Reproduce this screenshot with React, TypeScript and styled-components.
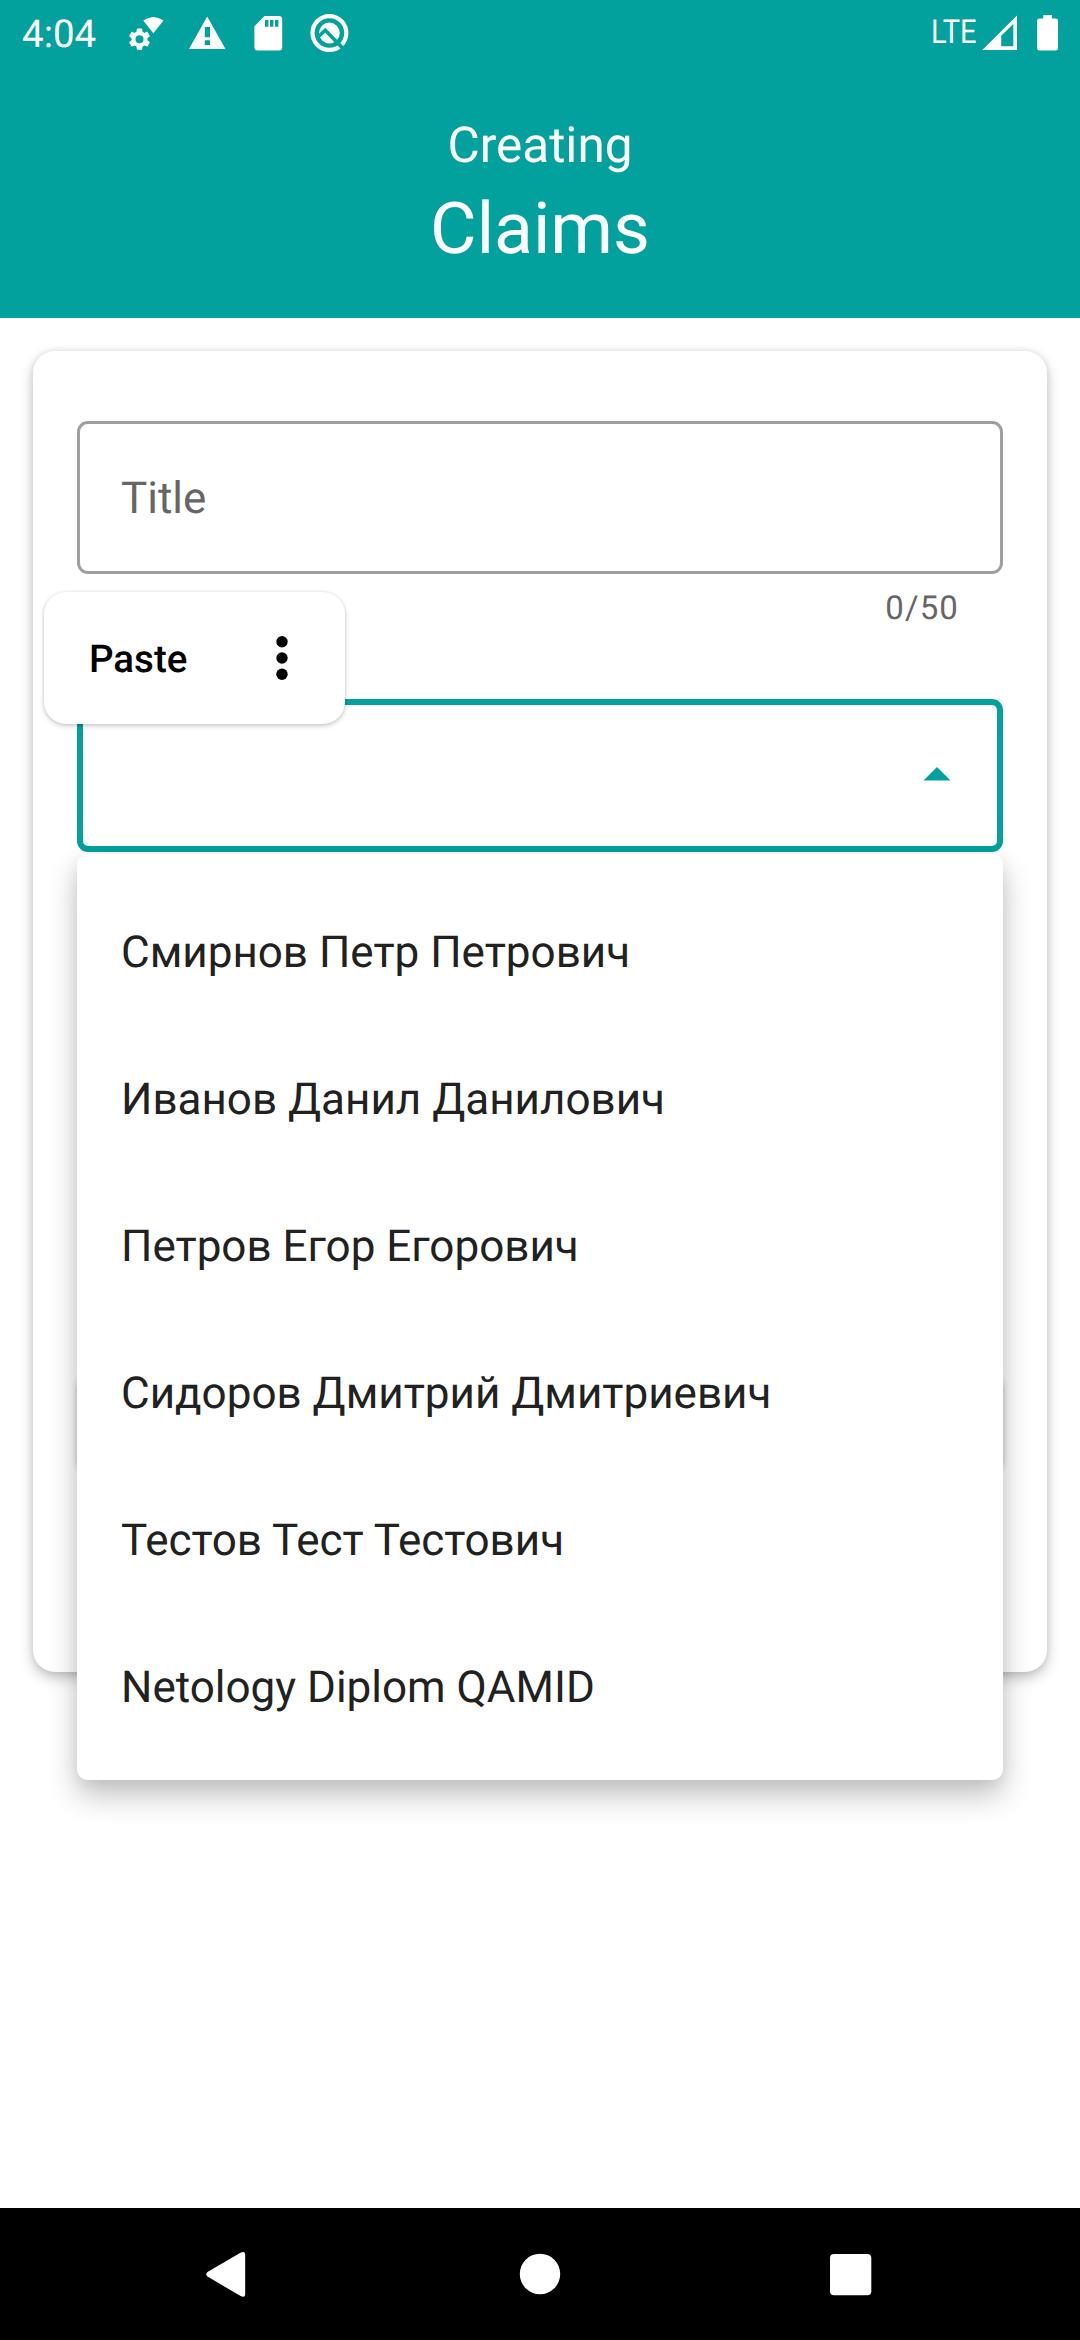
import React from 'react';
import styled, { createGlobalStyle } from 'styled-components';

const teal = '#03a19e';

const GlobalStyle = createGlobalStyle`
  * { box-sizing: border-box; }
  body { margin: 0; background: #fff; }
`;

const Screen = styled.div`
  width: 1080px;
  height: 2340px;
  display: flex;
  flex-direction: column;
  overflow: hidden;
  background: #fff;
  font-family: Roboto, 'Noto Sans', sans-serif;
  text-rendering: geometricPrecision;
`;

const StatusBar = styled.div`
  height: 66px;
  padding: 0 20px 0 22px;
  display: flex;
  justify-content: space-between;
  background: ${teal};
  color: #fff;
`;

const StatusGroup = styled.div`
  display: flex;
  align-items: flex-start;
`;

const Clock = styled.span`
  width: 103px;
  padding-top: 12px;
  font-size: 38.5px;
  line-height: 45px;
`;

const Network = styled.span`
  width: 49px;
  padding-top: 13px;
  font-size: 33px;
  line-height: 40px;
  transform: scaleX(0.88);
  transform-origin: left;
`;

const Header = styled.header`
  height: 252px;
  padding-top: 51px;
  display: flex;
  flex-direction: column;
  align-items: center;
  background: ${teal};
  color: #fff;
`;

const Subtitle = styled.div`
  font-size: 49.5px;
  line-height: 58px;
`;

const Heading = styled.h1`
  margin: 13px 0 0;
  font-size: 71.5px;
  font-weight: 400;
  line-height: 84px;
`;

const Main = styled.main`
  flex: 1;
  padding: 33px;
`;

const Card = styled.section`
  height: 1321px;
  padding: 70px 44px 0;
  border-radius: 22px;
  background: #fff;
  box-shadow: 0 6px 14px rgba(0, 0, 0, 0.23), 0 0 6px rgba(0, 0, 0, 0.1);
`;

const Field = styled.div<{ $active?: boolean }>`
  height: 153px;
  padding: ${(p) => (p.$active ? '0 46px 4px' : '0 41px')};
  display: flex;
  align-items: center;
  justify-content: ${(p) => (p.$active ? 'flex-end' : 'flex-start')};
  border: ${(p) => (p.$active ? `6px solid ${teal}` : '3px solid #9e9e9e')};
  border-radius: 11px;
  color: #666;
  font-size: 44px;
`;

const Counter = styled.div`
  height: 125px;
  padding: 13px 44px 0;
  color: #666;
  font-size: 33px;
  line-height: 44px;
  letter-spacing: 1.1px;
  text-align: right;
`;

const SelectBox = styled.div`
  position: relative;
`;

const Toolbar = styled.div`
  position: absolute;
  z-index: 2;
  left: -33px;
  top: -107px;
  width: 301px;
  height: 132px;
  padding: 0 57px 0 45px;
  display: flex;
  align-items: center;
  justify-content: space-between;
  border-radius: 22px;
  background: #fff;
  color: #000;
  font-size: 38.5px;
  font-weight: 500;
  box-shadow: 0 2px 5px rgba(0, 0, 0, 0.2), 0 0 3px rgba(0, 0, 0, 0.1);
`;

const ToolbarLabel = styled.span`
  padding-top: 3px;
`;

const Menu = styled.ul`
  position: absolute;
  z-index: 1;
  top: 155px;
  left: 0;
  right: 0;
  margin: 0;
  padding: 22px 0;
  list-style: none;
  border-radius: 11px;
  background: #fff;
  box-shadow: 0 16px 30px rgba(0, 0, 0, 0.23), 0 2px 16px rgba(0, 0, 0, 0.08);
`;

const Option = styled.li`
  height: 147px;
  padding: 4px 44px 0;
  display: flex;
  align-items: center;
  color: #212121;
  font-size: 44px;
`;

const ActionButton = styled.div`
  height: 95px;
  margin-top: 521px;
  border-radius: 11px;
  background: #fff;
  box-shadow: 0 4px 6px rgba(0, 0, 0, 0.22);
`;

const NavBar = styled.nav`
  height: 132px;
  display: flex;
  align-items: center;
  justify-content: center;
  gap: 245px;
  background: #000;
`;

const people = [
  'Смирнов Петр Петрович',
  'Иванов Данил Данилович',
  'Петров Егор Егорович',
  'Сидоров Дмитрий Дмитриевич',
  'Тестов Тест Тестович',
  'Netology Diplom QAMID',
];

const StatusIcons = () => (
  <svg width="235" height="66" viewBox="125 0 235 66" fill="#fff">
    <path d="M153.3 33.3 L143.2 20.6 Q153.3 13.4 163.6 20.6 Z" />
    <g transform="translate(139.5 39.2) scale(1.06) translate(-12 -12)">
      <path
        fillRule="evenodd"
        d="M19.43 12.98c.04-.32.07-.64.07-.98s-.03-.66-.07-.98l2.11-1.65c.19-.15.24-.42.12-.64l-2-3.46c-.12-.22-.39-.3-.61-.22l-2.49 1c-.52-.4-1.08-.73-1.69-.98l-.38-2.65C14.46 2.18 14.25 2 14 2h-4c-.25 0-.46.18-.49.42l-.38 2.65c-.61.25-1.17.59-1.69.98l-2.49-1c-.23-.09-.49 0-.61.22l-2 3.46c-.13.22-.07.49.12.64l2.11 1.65c-.04.32-.07.65-.07.98s.03.66.07.98l-2.11 1.65c-.19.15-.24.42-.12.64l2 3.46c.12.22.39.3.61.22l2.49-1c.52.4 1.08.73 1.69.98l.38 2.65c.03.24.24.42.49.42h4c.25 0 .46-.18.49-.42l.38-2.65c.61-.25 1.17-.59 1.69-.98l2.49 1c.23.09.49 0 .61-.22l2-3.46c.12-.22.07-.49-.12-.64l-2.11-1.65zM12 15.8a3.8 3.8 0 1 1 0-7.6 3.8 3.8 0 0 1 0 7.6z"
      />
    </g>
    <path fillRule="evenodd" d="M207.2 16.5 L225.5 49 H189 Z M204.8 27 V37.2 H210 V27 Z M204.8 40.2 V45 H210 V40.2 Z" />
    <path
      fillRule="evenodd"
      d="M264.5 16 H279 Q282.2 16 282.2 19.4 V47 Q282.2 50.5 279 50.5 H257.6 Q254.4 50.5 254.4 47 V26.3 Z M265 20 V26.8 H268.4 V20 Z M270 20 V26.8 H273.4 V20 Z M275 20 V26.8 H278.4 V20 Z"
    />
    <circle cx="329.4" cy="33" r="16.9" fill="none" stroke="#fff" strokeWidth="4.2" />
    <circle cx="329.4" cy="33" r="10.4" />
    <path d="M317 38 L325.3 30.3 L343 48.6" fill="none" stroke={teal} strokeWidth="3.6" />
  </svg>
);

export default function App() {
  return (
    <Screen>
      <GlobalStyle />
      <StatusBar>
        <StatusGroup>
          <Clock>4:04</Clock>
          <StatusIcons />
        </StatusGroup>
        <StatusGroup>
          <Network>LTE</Network>
          <svg width="80" height="66" viewBox="980 0 80 66" fill="#fff">
            <path fillRule="evenodd" d="M982.3 50 L1017 15.5 V50 Z M1001.2 46.2 H1013.3 V24 L1001.2 35.8 Z" />
            <path d="M1043.2 15 H1052 V18.6 H1055.6 Q1058 18.6 1058 21 V48.2 Q1058 50.6 1055.6 50.6 H1039.5 Q1037.1 50.6 1037.1 48.2 V21 Q1037.1 18.6 1039.5 18.6 H1043.2 Z" />
          </svg>
        </StatusGroup>
      </StatusBar>
      <Header>
        <Subtitle>Creating</Subtitle>
        <Heading>Claims</Heading>
      </Header>
      <Main>
        <Card>
          <Field>Title</Field>
          <Counter>0/50</Counter>
          <SelectBox>
            <Field $active>
              <svg width="28" height="14" viewBox="0 0 28 14">
                <path d="M0.5 13.5 L14 0 L27.5 13.5 Z" fill={teal} />
              </svg>
            </Field>
            <Toolbar>
              <ToolbarLabel>Paste</ToolbarLabel>
              <svg width="12" height="46" viewBox="0 0 12 46">
                <circle cx="6" cy="6.7" r="5.7" />
                <circle cx="6" cy="23" r="5.7" />
                <circle cx="6" cy="39.3" r="5.7" />
              </svg>
            </Toolbar>
            <Menu>
              {people.map((name) => (
                <Option key={name}>{name}</Option>
              ))}
            </Menu>
          </SelectBox>
          <ActionButton />
        </Card>
      </Main>
      <NavBar>
        <svg width="66" height="66" viewBox="196 2241 66 66">
          <path d="M207.5 2276.6 Q205 2274.3 207.5 2272 L240 2253 Q245.2 2250.5 245.2 2255 V2293.8 Q245.2 2298.2 240.6 2296 Z" fill="#fff" />
        </svg>
        <svg width="66" height="66" viewBox="507 2241 66 66">
          <circle cx="540" cy="2274" r="20.2" fill="#fff" />
        </svg>
        <svg width="66" height="66" viewBox="818 2241 66 66">
          <rect x="830" y="2254" width="41.3" height="41.3" rx="4" fill="#fff" />
        </svg>
      </NavBar>
    </Screen>
  );
}
